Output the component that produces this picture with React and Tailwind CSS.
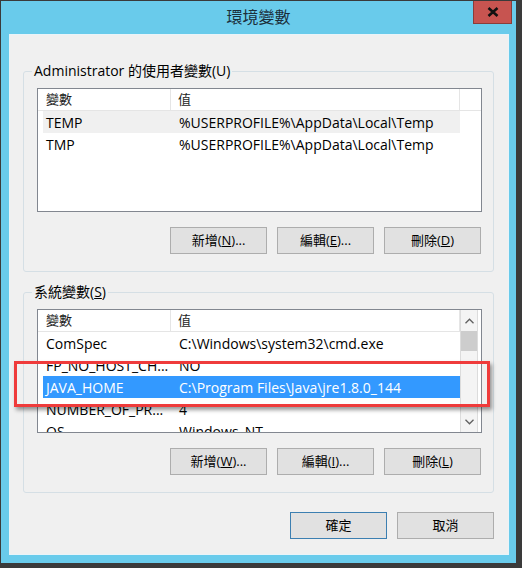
const font = { fontFamily: '"Open Sans", "Noto Sans CJK TC", sans-serif' };

const userVars = [
  ["TEMP", "%USERPROFILE%\\AppData\\Local\\Temp"],
  ["TMP", "%USERPROFILE%\\AppData\\Local\\Temp"],
];

const systemVars = [
  ["ComSpec", "C:\\Windows\\system32\\cmd.exe"],
  ["FP_NO_HOST_CH...", "NO"],
  ["JAVA_HOME", "C:\\Program Files\\Java\\jre1.8.0_144"],
  ["NUMBER_OF_PR...", "4"],
  ["OS", "Windows_NT"],
];

function Chevron({ down }) {
  return (
    <svg width="9" height="6" viewBox="0 0 9 6" fill="none">
      <path
        d={down ? "M0.5 0.8 L4.5 4.8 L8.5 0.8" : "M0.5 5.2 L4.5 1.2 L8.5 5.2"}
        stroke="#606060"
        strokeWidth="1.3"
      />
    </svg>
  );
}

function ListView({ rows, hot, selected, scroll }) {
  return (
    <div className="flex h-[124px] w-[445px] overflow-hidden border border-[#828790] bg-white">
      <div className="flex w-[422px] shrink-0 flex-col">
        <div className="flex h-[22px] shrink-0 border-b border-[#e5e5e5] text-[13px] text-[#1e1e1e]">
          <div className="flex w-[133px] items-center border-r border-[#e5e5e5] pl-[8px]">變數</div>
          <div className="flex w-[289px] items-center border-r border-[#e5e5e5] pl-[7px]">值</div>
        </div>
        {rows.map(([name, value], i) => (
          <div
            key={name}
            className={
              "ml-[5px] flex h-[22px] shrink-0 items-center text-[14px] " +
              (i === selected
                ? "bg-[#3399ff] text-white"
                : i === hot
                ? "bg-[#f0f0f0] text-black"
                : "text-black")
            }
          >
            <div className="w-[128px] truncate pl-[3px]">{name}</div>
            <div className="w-[289px] pl-[8px] whitespace-nowrap">{value}</div>
          </div>
        ))}
      </div>
      {scroll ? (
        <div className="flex w-[18px] shrink-0 flex-col justify-between border-x border-[#dcdcdc] bg-[#f4f4f4]">
          <div>
            <div className="flex h-[21px] items-center justify-center">
              <Chevron />
            </div>
            <div className="h-[20px] bg-[#cdcdcd]" />
          </div>
          <div className="flex h-[21px] items-center justify-center">
            <Chevron down />
          </div>
        </div>
      ) : (
        <div className="h-[22px] flex-1 border-b border-[#e5e5e5]" />
      )}
    </div>
  );
}

function Button({ children, primary }) {
  return (
    <div
      className={
        "flex h-[27px] w-[97px] items-center justify-center border bg-[#e1e1e1] text-[13px] text-black " +
        (primary ? "border-[#3c7fb1]" : "border-[#adadad]")
      }
    >
      {children}
    </div>
  );
}

function Group({ label, children }) {
  return (
    <fieldset className="m-0 w-[471px] rounded-[3px] border border-[#d5dfe5] p-0">
      <legend className="ml-[8px] px-[2px] text-[14px] leading-[20px] text-black">{label}</legend>
      <div className="pl-[13px] pt-[7px] pb-[17px]">{children}</div>
    </fieldset>
  );
}

function Buttons({ items }) {
  return (
    <div className="mt-[15px] flex w-[444px] justify-end gap-[10px]">
      {items.map((b) => (
        <Button key={b[0]}>
          {b[0]}(<span className="underline">{b[1]}</span>){b[2]}
        </Button>
      ))}
    </div>
  );
}

export default function App() {
  return (
    <div className="h-[568px] w-[522px] bg-[#3a3a3a] pl-[1px] pt-[1px]" style={font}>
      <div className="relative flex h-[562px] w-[515px] flex-col bg-[#69cbeb]">
        <div className="grid h-[33px] shrink-0 grid-cols-[1fr_auto_1fr]">
          <div />
          <div className="pt-[4px] text-[16px] leading-[24px] text-[#1b2e3a]">環境變數</div>
          <div className="flex justify-end pr-[4px]">
            <div className="flex h-[23px] w-[39px] items-center justify-center border border-t-0 border-[#8a3d3a] bg-[#c75450]">
              <svg width="12" height="10" viewBox="0 0 12 10">
                <path d="M1.5 1 L10.5 9 M10.5 1 L1.5 9" stroke="#111" strokeWidth="2.6" />
              </svg>
            </div>
          </div>
        </div>
        <div className="mb-[8px] ml-[8px] mr-[7px] flex flex-1 flex-col border border-[#e9f4f9] bg-[#f0f0f0] pl-[13px] pt-[26px]">
          <Group label="Administrator 的使用者變數(U)">
            <ListView rows={userVars} hot={0} />
            <Buttons items={[["新增", "N", "..."], ["編輯", "E", "..."], ["刪除", "D", ""]]} />
          </Group>
          <div className="h-[10px]" />
          <Group label={<>系統變數(<span className="underline">S</span>)</>}>
            <ListView rows={systemVars} selected={2} scroll />
            <Buttons items={[["新增", "W", "..."], ["編輯", "I", "..."], ["刪除", "L", ""]]} />
          </Group>
          <div className="mt-[19px] flex w-[471px] justify-end gap-[10px]">
            <Button primary>確定</Button>
            <Button>取消</Button>
          </div>
        </div>
        <div className="absolute left-[13px] top-[360px] h-[46px] w-[476px] border-[3px] border-[#ef3b3b] shadow-[2px_3px_4px_rgba(0,0,0,0.4)]" />
      </div>
    </div>
  );
}
